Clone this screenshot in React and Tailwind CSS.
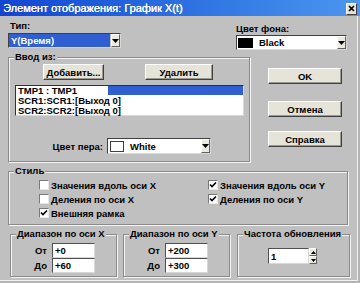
import React from 'react'

const blue = 'bg-[#2f5fd2]'

function Arrow() {
  return (
    <svg width="7" height="4" viewBox="0 0 7 4">
      <path d="M0 0h7L3.5 4z" fill="#000" />
    </svg>
  )
}

function DropBtn() {
  return (
    <div className="w-[9px] h-full flex items-center justify-center bg-[#eceae0] border border-white border-b-[#606060] border-r-[#606060]">
      <Arrow />
    </div>
  )
}

function Button({ children, className = '' }) {
  return (
    <div
      className={`flex items-center justify-center bg-[#e6e4d8] border border-white border-b-[#404040] border-r-[#404040] shadow-[inset_-1px_-1px_0_#9a9a90] text-black ${className}`}
    >
      {children}
    </div>
  )
}

function Group({ label, className = '', children }) {
  return (
    <div className={`border border-[#8a8a8a] shadow-[1px_1px_0_#f4f4f4,inset_1px_1px_0_#f4f4f4] ${className}`}>
      <div className="w-fit -mt-[7px] ml-[5px] px-[1px] bg-[#c0c0c0] leading-[11px] h-[11px]">{label}</div>
      {children}
    </div>
  )
}

function Check({ checked, label }) {
  return (
    <div className="flex items-center h-[14px]">
      <div className="w-[10px] h-[10px] bg-white border border-[#7a7a7a] border-b-[#e8e8e8] border-r-[#e8e8e8] flex items-center justify-center">
        {checked && (
          <svg width="8" height="8" viewBox="0 0 8 8">
            <path d="M1 3.5l2 2L7 1.5" stroke="#000" strokeWidth="1.6" fill="none" />
          </svg>
        )}
      </div>
      <span className="ml-[2px]">{label}</span>
    </div>
  )
}

function Field({ value, className = '' }) {
  return (
    <div className={`bg-white border border-[#505050] border-b-[#d8d8d8] border-r-[#d8d8d8] flex items-center pl-[2px] leading-[11px] ${className}`}>
      {value}
    </div>
  )
}

function Range({ label, from, to }) {
  return (
    <Group label={label} className="w-[107px] h-[43px]">
      <div className="flex flex-col mt-[4px]">
        <div className="flex items-center">
          <div className="w-[36px] text-right">От</div>
          <Field value={from} className="ml-[5px] w-[43px] h-[15px]" />
        </div>
        <div className="flex items-center">
          <div className="w-[36px] text-right">До</div>
          <Field value={to} className="ml-[5px] w-[43px] h-[15px]" />
        </div>
      </div>
    </Group>
  )
}

export default function App() {
  return (
    <div className="w-[360px] h-[283px] overflow-hidden bg-[#b4b4b4] flex flex-col font-['Liberation_Sans',Arial,sans-serif] text-[9.5px] font-bold text-black">
      {/* title bar */}
      <div className="h-[16px] flex items-center justify-between bg-gradient-to-r from-[#1444d2] to-[#4c96ef]">
        <span className="ml-[3px] text-[11px] font-normal text-white leading-[12px] [text-shadow:0.3px_0_0_#fff]">
          Элемент отображения: График X(t)
        </span>
        <div className="mr-[3px] mt-[1px] w-[11px] h-[12px] bg-[#e6e4d8] border border-white border-b-[#404040] border-r-[#404040] flex items-center justify-center">
          <svg width="7" height="7" viewBox="0 0 7 7">
            <path d="M1 1l5 5M6 1l-5 5" stroke="#000" strokeWidth="1.7" />
          </svg>
        </div>
      </div>

      <div className="flex-1 flex flex-col bg-[#c0c0c0] mr-[2px] mb-[2px] border-r border-b border-[#f0f0f0] leading-[11px]">
        {/* top row */}
        <div className="flex h-[34px]">
          <div className="ml-[8px] pt-[4px]">
            <div className="ml-[2px] h-[11px]">Тип:</div>
            <div className="mt-[2px] w-[113px] h-[15px] flex border border-[#404040] border-b-[#d8d8d8] border-r-[#d8d8d8]">
              <div className={`flex-1 ${blue} text-white flex items-center pl-[2px]`}>Y(Время)</div>
              <div className="ml-[1px]"><DropBtn /></div>
            </div>
          </div>
          <div className="ml-[115px] pt-[7px]">
            <div className="h-[11px]">Цвет фона:</div>
            <div className="mt-[1px] w-[111px] h-[15px] flex items-center bg-white border border-[#404040] border-b-[#d8d8d8] border-r-[#d8d8d8]">
              <div className="ml-[1px] w-[15px] h-[10px] bg-black" />
              <div className="ml-[6px] flex-1">Black</div>
              <div className="h-[13px]"><DropBtn /></div>
            </div>
          </div>
        </div>

        {/* middle */}
        <div className="flex">
          <Group label="Ввод из:" className="mt-[7px] ml-[8px] w-[242px] h-[105px]">
            <div className="flex mt-[2px]">
              <Button className="ml-[34px] w-[61px] h-[16px]">Добавить...</Button>
              <Button className="ml-[41px] w-[68px] h-[16px]">Удалить</Button>
            </div>
            <div className="mt-[5px] ml-[6px] w-[229px] h-[31px] bg-white border border-[#303030] border-b-[#d8d8d8] border-r-[#d8d8d8] flex flex-col">
              <div className="flex h-[9px]">
                <span className="w-[92px] pl-[2px] leading-[10px]">TMP1 : TMP1</span>
                <span className={`flex-1 ${blue}`} />
              </div>
              <div className="h-[10px] pl-[2px] leading-[11px]">SCR1:SCR1:[Выход 0]</div>
              <div className="h-[10px] pl-[2px] leading-[11px]">SCR2:SCR2:[Выход 0]</div>
            </div>
            <div className="flex items-center mt-[22px]">
              <div className="w-[94px] text-right">Цвет пера:</div>
              <div className="ml-[4px] w-[104px] h-[16px] flex items-center bg-white border border-[#404040] border-b-[#d8d8d8] border-r-[#d8d8d8]">
                <div className="ml-[2px] w-[14px] h-[11px] bg-white border border-[#404040]" />
                <div className="ml-[6px] flex-1">White</div>
                <div className="h-[14px]"><DropBtn /></div>
              </div>
            </div>
          </Group>
          <div className="ml-[18px] flex flex-col">
            <Button className="mt-[18px] w-[74px] h-[16px]">OK</Button>
            <Button className="mt-[17px] w-[74px] h-[16px]">Отмена</Button>
            <Button className="mt-[14px] w-[74px] h-[16px]">Справка</Button>
          </div>
        </div>

        {/* style */}
        <Group label="Стиль" className="mt-[9px] ml-[8px] w-[340px] h-[54px]">
          <div className="flex mt-[2px]">
            <div className="ml-[30px] w-[169px] flex flex-col">
              <Check label="Значения вдоль оси X" />
              <Check label="Деления по оси X" />
              <Check checked label="Внешняя рамка" />
            </div>
            <div className="flex flex-col">
              <Check checked label="Значения вдоль оси Y" />
              <Check checked label="Деления по оси Y" />
            </div>
          </div>
        </Group>

        {/* bottom */}
        <div className="flex mt-[9px]">
          <div className="ml-[10px]">
            <Range label="Диапазон по оси X" from="+0" to="+60" />
          </div>
          <div className="ml-[6px]">
            <Range label="Диапазон по оси Y" from="+200" to="+300" />
          </div>
          <Group label="Частота обновления" className="ml-[7px] w-[113px] h-[43px]">
            <div className="flex ml-[30px] mt-[9px] h-[16px]">
              <Field value="1" className="w-[41px] h-[16px]" />
              <div className="w-[8px] flex flex-col">
                <div className="h-[8px] bg-[#eceae0] border border-white border-b-[#606060] border-r-[#606060] flex items-center justify-center">
                  <svg width="5" height="3" viewBox="0 0 5 3"><path d="M0 3h5L2.5 0z" fill="#000" /></svg>
                </div>
                <div className="h-[8px] bg-[#eceae0] border border-white border-b-[#606060] border-r-[#606060] flex items-center justify-center">
                  <svg width="5" height="3" viewBox="0 0 5 3"><path d="M0 0h5L2.5 3z" fill="#000" /></svg>
                </div>
              </div>
            </div>
          </Group>
        </div>
      </div>
    </div>
  )
}
